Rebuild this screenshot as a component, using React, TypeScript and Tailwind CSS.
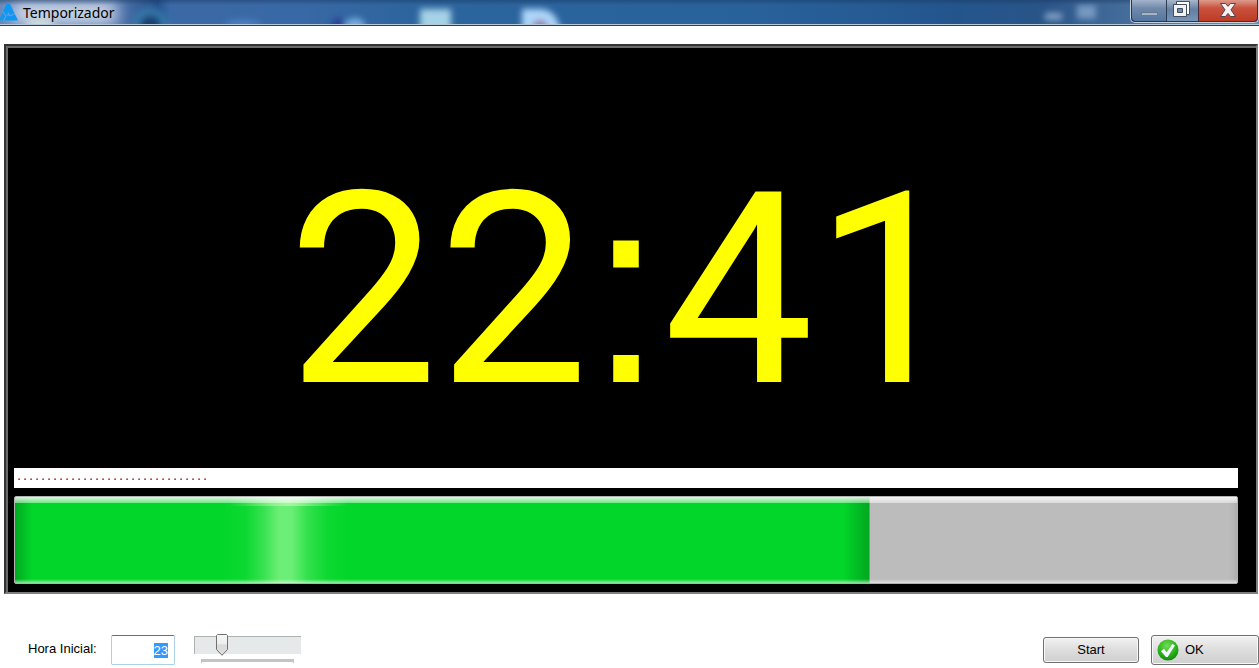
import { useEffect, useRef, useState } from "react";

function TitleBar() {
  return (
    <header className="relative flex h-[26px] shrink-0 items-start overflow-hidden border-b border-[#24425f] bg-linear-to-r from-[#7d97c0] via-[#2d64a0] to-[#5f83ad]">
      <svg className="absolute inset-0 h-full w-full" aria-hidden="true">
        <defs>
          <linearGradient id="glass" x1="0" x2="1" y1="0" y2="0">
            <stop offset="0" stopColor="#6585b5" />
            <stop offset="0.09" stopColor="#5578ae" />
            <stop offset="0.125" stopColor="#24508c" />
            <stop offset="0.135" stopColor="#3b69a6" />
            <stop offset="0.24" stopColor="#3868a5" />
            <stop offset="0.34" stopColor="#2c649d" />
            <stop offset="0.6" stopColor="#29619b" />
            <stop offset="0.76" stopColor="#23558c" />
            <stop offset="0.83" stopColor="#2a5488" />
            <stop offset="0.88" stopColor="#3f6897" />
            <stop offset="1" stopColor="#6e8db2" />
          </linearGradient>
          <linearGradient id="shade" x1="0" x2="0" y1="0" y2="1">
            <stop offset="0" stopColor="#17365e" stopOpacity="0.45" />
            <stop offset="0.2" stopColor="#17365e" stopOpacity="0" />
          </linearGradient>
          <filter id="soft" filterUnits="userSpaceOnUse" x="0" y="-20" width="1259" height="70">
            <feGaussianBlur stdDeviation="3" />
          </filter>
          <filter id="halo" x="-30%" y="-120%" width="160%" height="340%">
            <feGaussianBlur stdDeviation="8" />
          </filter>
        </defs>
        <rect width="100%" height="100%" fill="url(#glass)" />
        <rect x="12" y="2" width="104" height="22" fill="#d3dbea" filter="url(#halo)" />
        <g filter="url(#soft)">
          <ellipse cx="40" cy="24" rx="15" ry="4" fill="#dde6d8" />
          <circle cx="150" cy="26" r="15" fill="none" stroke="#347aaa" strokeWidth="6" />
          <circle cx="150" cy="26" r="9" fill="#123f6c" />
          <ellipse cx="243" cy="24" rx="18" ry="4" fill="#4d83c8" />
          <ellipse cx="338" cy="26" rx="7" ry="8" fill="#2c3f98" />
          <ellipse cx="355" cy="26" rx="10" ry="8" fill="#76aee0" />
          <rect x="420" y="9" width="31" height="30" fill="#a5d2e6" />
          <path d="M522 9h18q19 0 22 30h-40z" fill="#aed6fa" />
          <ellipse cx="540" cy="28" rx="8" ry="8" fill="#9a76a2" />
          <rect x="1045" y="13" width="17" height="7" fill="#85a4c8" />
          <rect x="1077" y="5" width="19" height="14" fill="#7699c2" />
        </g>
        <rect width="100%" height="100%" fill="url(#shade)" />
        <rect y="24" width="100%" height="1" fill="#b5c9dd" />
      </svg>
      <svg className="relative mt-[3px] h-[18px] w-[18px]" viewBox="0 0 18 18" aria-hidden="true">
        <path d="M6.500 1h3.500l8 16.500H-1z" fill="#0c97f5" />
        <path d="M8 9.500 10 13H6z" fill="#5e8fcb" />
        <path d="M2.500 8 6 13M6 13 3.500 18M8 9.500l2 3.500 5-2.500" fill="none" stroke="#7fa0cd" strokeWidth="1" />
      </svg>
      <h1 className="relative ml-[5px] font-['Noto_Sans',sans-serif] text-[14px] leading-[26px] text-black">Temporizador</h1>
      <div className="relative ml-auto flex h-[23px] rounded-b-[5px] border border-t-0 border-[#c5d2e0] bg-[#27364f] px-px pb-px">
        <button aria-label="Minimizar" className="flex w-[35px] justify-center rounded-bl-[4px] border-r border-[#2c3c55] bg-linear-to-b from-[#a3b4cb] from-0% via-[#7089aa] via-40% to-[#53769f] to-100%">
          <svg width="18" height="21" viewBox="0 0 18 21" aria-hidden="true">
            <rect x="1.500" y="12.500" width="16" height="3" fill="#a6b5c6" stroke="#64788f" />
          </svg>
        </button>
        <button aria-label="Restaurar" className="flex w-8 justify-center border-r border-[#482736] bg-linear-to-b from-[#a9b8cc] from-0% via-[#6480a3] via-45% to-[#7694b7] to-100%">
          <svg className="mr-1" width="20" height="21" viewBox="0 0 20 21" aria-hidden="true">
            <path d="M5.500 1.500h13v13h-13z" fill="#fff" stroke="#424c61" />
            <path d="M2.500 4.500h13v12h-13z" fill="#f2f2f2" stroke="#424c61" />
            <path d="M6.500 8.500h5v4h-5z" fill="#718caf" stroke="#424c61" />
          </svg>
        </button>
        <button aria-label="Cerrar" className="flex w-[58px] justify-center rounded-br-[4px] bg-linear-to-b from-[#dc9a8b] from-0% via-[#c9523f] via-38% to-[#bd3b22] to-100%">
          <svg width="18" height="21" viewBox="0 0 18 21" aria-hidden="true">
            <path d="M1.500 3.500h5L9 6.300l2.500-2.800h5L12 9.800l4.500 6.700h-5L9 13.400l-2.500 3.100h-5L6 9.800z" fill="#f5f2f2" stroke="#554252" strokeLinejoin="round" />
          </svg>
        </button>
      </div>
    </header>
  );
}

function Progress({ value }: { value: number }) {
  return (
    <div
      role="progressbar"
      aria-label="Progreso"
      aria-valuenow={value}
      className="relative mt-2 h-22 overflow-hidden rounded-[2px] border border-[#b2b2b2] bg-[#bcbcbc] shadow-[inset_-8px_0_6px_-6px_#aaaaaa]"
    >
      <div className="relative h-full overflow-hidden border-r border-[#35c94e] bg-[#02d62a]" style={{ width: `${value}%` }}>
        <div className="absolute inset-0 bg-linear-to-r from-[#00a81f] from-0% via-[#00a81f00] via-2% to-[#00a81f00] to-100%" />
        <div className="absolute inset-0 bg-linear-to-l from-[#00a81f] from-0% via-[#00a81f00] via-3% to-[#00a81f00] to-100%" />
        <div className="absolute inset-y-0 left-[24%] w-[15%] bg-[linear-gradient(90deg,transparent,#72f07a18_20%,#72f07a70_33%,#72f07af0_46%,#72f07af0_56%,#72f07a70_68%,#72f07a18_84%,transparent)]" />
        <div className="absolute top-0 left-[25%] h-[9px] w-[14%] bg-[linear-gradient(90deg,transparent,#a3f59f80_30%,#a3f59f_50%,#a3f59f80_70%,transparent)]" />
      </div>
      <div className="absolute inset-x-0 top-0 h-1.5 bg-linear-to-b from-[#ffffffd8] to-[#ffffff70]" />
      <div className="absolute inset-x-0 bottom-0 h-1 bg-linear-to-t from-[#ffffff90] to-[#ffffff00]" />
    </div>
  );
}

function TrackBar() {
  const [value, setValue] = useState(20);
  return (
    <div className="relative ml-[19px] h-8 w-[107px]">
      <div className="mt-0.5 h-[18px] border-t border-l border-[#aeb2b2] bg-[#e5e9e9]" />
      <div className="mx-[7px] mt-[5px] h-1 border-x border-t-3 border-[#c4c4c4]" />
      <svg
        className="absolute top-0 h-[22px] w-3"
        style={{ left: `${7 + value * 0.75}px` }}
        width="12"
        height="22"
        viewBox="0 0 12 22"
        aria-hidden="true"
      >
        <defs>
          <linearGradient id="thumb" x1="0" x2="0" y1="0" y2="1">
            <stop offset="0" stopColor="#f6f6f6" />
            <stop offset="0.45" stopColor="#eeeeee" />
            <stop offset="0.5" stopColor="#dadada" />
            <stop offset="1" stopColor="#dedede" />
          </linearGradient>
        </defs>
        <path d="M1.500.5h9l1 1v14L6 21.300.5 15.500v-14z" fill="url(#thumb)" stroke="#707070" />
      </svg>
      <input
        type="range"
        aria-label="Ajustar hora inicial"
        value={value}
        onChange={(e) => setValue(Number(e.target.value))}
        className="absolute inset-0 w-full opacity-0"
      />
    </div>
  );
}

export default function App() {
  const hour = useRef<HTMLInputElement>(null);
  useEffect(() => {
    hour.current?.focus();
    hour.current?.select();
  }, []);

  return (
    <div className="flex min-h-screen flex-col bg-white font-['Liberation_Sans',Arial,sans-serif] text-[13px] text-black">
      <TitleBar />
      <main className="mt-[18px] mr-px ml-1 flex flex-1 flex-col border-2 border-t-[#333333] border-r-[#808080] border-b-[#808080] border-l-[#333333]">
        <div className="flex flex-1 flex-col border-t-2 border-l-2 border-[#696969] bg-black pr-[18px] pb-2 pl-1.5">
          <div className="flex flex-1 items-center justify-center pt-16">
            <time className="font-[Roboto,sans-serif] text-[268px] leading-[300px] whitespace-nowrap text-[#ffff00]">
              22<span className="font-['Liberation_Sans',Arial,sans-serif] leading-none">:</span>41
            </time>
          </div>
          <div className="h-5 overflow-hidden bg-white pl-0.5 font-['Liberation_Mono',monospace] text-[10px] leading-5 text-[#20005c]">
            ................................
          </div>
          <Progress value={70} />
        </div>
      </main>
      <footer className="flex h-[74px] shrink-0 items-center pt-[38px] pl-7">
        <label htmlFor="hour" className="w-[83px] pb-0.5 whitespace-nowrap">Hora Inicial:</label>
        <input
          ref={hour}
          id="hour"
          defaultValue="23"
          className="h-[30px] w-16 rounded-[2px] border border-[#abd2e8] border-t-[#3d7bad] pr-1.5 text-right leading-4 caret-transparent outline-none selection:bg-[#3399ff] selection:text-white"
        />
        <TrackBar />
        <button className="ml-auto h-[26px] w-24 rounded-[3px] border border-[#707070] bg-linear-to-b from-[#f2f2f2] from-0% via-[#dddddd] via-50% to-[#cfcfcf] to-100% shadow-[inset_0_0_0_1px_#f8f8f8]">
          Start
        </button>
        <button className="ml-3 flex h-[30px] w-27 items-center gap-1.5 rounded-[3px] border border-[#707070] bg-linear-to-b from-[#f2f2f2] from-0% via-[#dddddd] via-50% to-[#cfcfcf] to-100% pl-[5px] shadow-[inset_0_0_0_1px_#f8f8f8]">
          <svg width="22" height="22" viewBox="0 0 22 22" aria-hidden="true">
            <defs>
              <radialGradient id="ok" cx="0.45" cy="0.3" r="0.7">
                <stop offset="0" stopColor="#72dc58" />
                <stop offset="0.6" stopColor="#2fb51c" />
                <stop offset="1" stopColor="#128a0c" />
              </radialGradient>
            </defs>
            <circle cx="11" cy="11" r="10.500" fill="url(#ok)" />
            <path d="M4 12.200 7 9.800l2.700 3.500L15.300 5l2.700 1.300L10.700 18H9z" fill="#f3f7ff" />
          </svg>
          OK
        </button>
      </footer>
    </div>
  );
}
